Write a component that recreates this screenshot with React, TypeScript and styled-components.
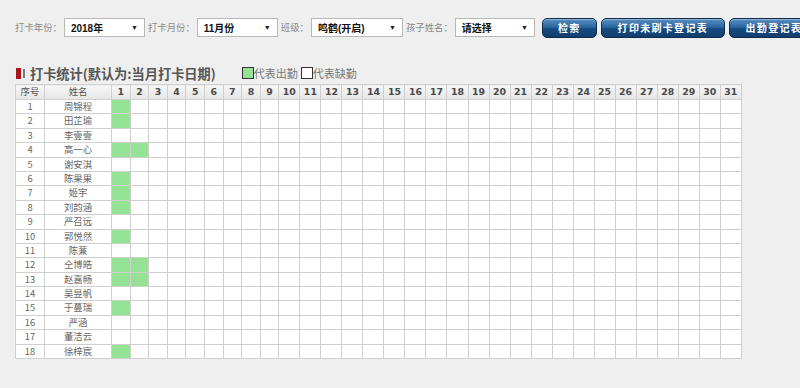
import React from "react";
import styled, { createGlobalStyle } from "styled-components";

const Global = createGlobalStyle`
  html, body { margin: 0; padding: 0; background: #efefef; }
  body { font-family: "Noto Sans CJK SC", "Noto Sans", sans-serif; width: 800px; height: 388px; overflow: hidden; }
`;

const Page = styled.div`
  padding: 17px 0 0 15px;
  display: flex;
  flex-direction: column;
`;

const Toolbar = styled.div`
  display: flex;
  align-items: center;
  height: 21px;
  white-space: nowrap;
  & > * { flex-shrink: 0; }
`;

const Label = styled.span`
  font-size: 9.4px;
  color: #8a8a8a;
  margin-right: 2px;
  line-height: 1;
`;

const FakeSelect = styled.div<{ $w: number }>`
  width: ${(p) => p.$w}px;
  height: 19px;
  box-sizing: border-box;
  border: 1px solid #b8b8b8;
  background: #fff;
  display: flex;
  align-items: center;
  justify-content: space-between;
  padding: 0 6px 0 6px;
  margin-right: 3px;
  font-size: 10px;
  font-weight: bold;
  color: #111;
  font-family: "Liberation Sans", "Noto Sans CJK SC", sans-serif;
`;

const Arrow = styled.span`
  font-size: 7px;
  color: #222;
`;

const Button = styled.div<{ $w: number }>`
  width: ${(p) => p.$w}px;
  height: 20px;
  box-sizing: border-box;
  margin-left: 4px;
  border-radius: 5px;
  border: 1px solid #0d2c4d;
  background: linear-gradient(#5a8ec2 0%, #2c67a0 45%, #164a7e 55%, #113f6e 100%);
  box-shadow: inset 0 1px 0 rgba(255,255,255,0.35);
  color: #fff;
  font-size: 10px;
  font-weight: bold;
  letter-spacing: 1.3px;
  display: flex;
  align-items: center;
  justify-content: center;
`;

const TitleRow = styled.div`
  display: flex;
  align-items: center;
  margin-top: 26px;
  height: 18px;
`;

const RedMark = styled.span`
  width: 5px;
  height: 11px;
  background: #a8161c;
  margin-left: 1px;
`;

const GreyMark = styled.span`
  width: 2px;
  height: 9px;
  background: #7a7a7a;
  margin-left: 2px;
  margin-right: 5px;
`;

const Title = styled.span`
  font-size: 13.2px;
  font-weight: bold;
  color: #555;
`;

const LegendBox = styled.span<{ $on: boolean }>`
  width: 12px;
  height: 12px;
  box-sizing: border-box;
  border: 1px solid #333;
  background: ${(p) => (p.$on ? "#94e294" : "#fff")};
  margin-left: ${(p) => (p.$on ? "26px" : "3px")};
`;

const LegendText = styled.span`
  font-size: 11px;
  color: #777;
`;

const Table = styled.table`
  border-collapse: collapse;
  table-layout: fixed;
  width: 727px;
  margin-top: 2px;
  background: #fff;
  font-size: 9.4px;
  color: #666;
`;

const Th = styled.th`
  height: 14px;
  border: 1px solid #cfcfcf;
  background: linear-gradient(#f6f6f6, #e6e6e6);
  padding: 0;
  font-weight: normal;
  color: #555;
  line-height: 1;
`;

const DayTh = styled(Th)`
  font-family: "DejaVu Sans", sans-serif;
  font-weight: bold;
  font-size: 9.4px;
  color: #4a4a4a;
`;

const Td = styled.td<{ $on?: boolean }>`
  height: 13.4px;
  border: 1px solid #cfcfcf;
  padding: 0;
  text-align: center;
  line-height: 1;
  background: ${(p) => (p.$on ? "#94e294" : "#fff")};
`;

const students: [string, number[]][] = [
  ["周锦程", [1]],
  ["田芷瑜", [1]],
  ["李壹壹", []],
  ["高一心", [1, 2]],
  ["谢安淇", []],
  ["陈果果", [1]],
  ["姬宇", [1]],
  ["刘韵涵", [1]],
  ["严召远", []],
  ["郭悦然", [1]],
  ["陈蒹", []],
  ["仝博皓", [1, 2]],
  ["赵嘉畅", [1, 2]],
  ["吴昱帆", []],
  ["于蔓瑞", [1]],
  ["严涵", []],
  ["董洁云", []],
  ["徐梓宸", [1]],
];

const days = Array.from({ length: 31 }, (_, i) => i + 1);

export default function App() {
  return (
    <>
      <Global />
      <Page>
        <Toolbar>
          <Label>打卡年份：</Label>
          <FakeSelect $w={81}>2018年<Arrow>▼</Arrow></FakeSelect>
          <Label>打卡月份：</Label>
          <FakeSelect $w={81}>11月份<Arrow>▼</Arrow></FakeSelect>
          <Label>班级：</Label>
          <FakeSelect $w={92}>鸣鹤(开启)<Arrow>▼</Arrow></FakeSelect>
          <Label>孩子姓名：</Label>
          <FakeSelect $w={80}>请选择<Arrow>▼</Arrow></FakeSelect>
          <Button $w={55}>检索</Button>
          <Button $w={124}>打印未刷卡登记表</Button>
          <Button $w={90}>出勤登记表</Button>
        </Toolbar>
        <TitleRow>
          <RedMark />
          <GreyMark />
          <Title>打卡统计(默认为:当月打卡日期)</Title>
          <LegendBox $on />
          <LegendText>代表出勤</LegendText>
          <LegendBox $on={false} />
          <LegendText>代表缺勤</LegendText>
        </TitleRow>
        <Table>
          <colgroup>
            <col style={{ width: 29 }} />
            <col style={{ width: 67 }} />
            {days.map((d) => (
              <col key={d} style={{ width: d < 10 ? 18.6 : 21.03 }} />
            ))}
          </colgroup>
          <thead>
            <tr>
              <Th>序号</Th>
              <Th>姓名</Th>
              {days.map((d) => (
                <DayTh key={d}>{d}</DayTh>
              ))}
            </tr>
          </thead>
          <tbody>
            {students.map(([name, on], i) => (
              <tr key={i}>
                <Td>{i + 1}</Td>
                <Td>{name}</Td>
                {days.map((d) => (
                  <Td key={d} $on={on.includes(d)} />
                ))}
              </tr>
            ))}
          </tbody>
        </Table>
      </Page>
    </>
  );
}
